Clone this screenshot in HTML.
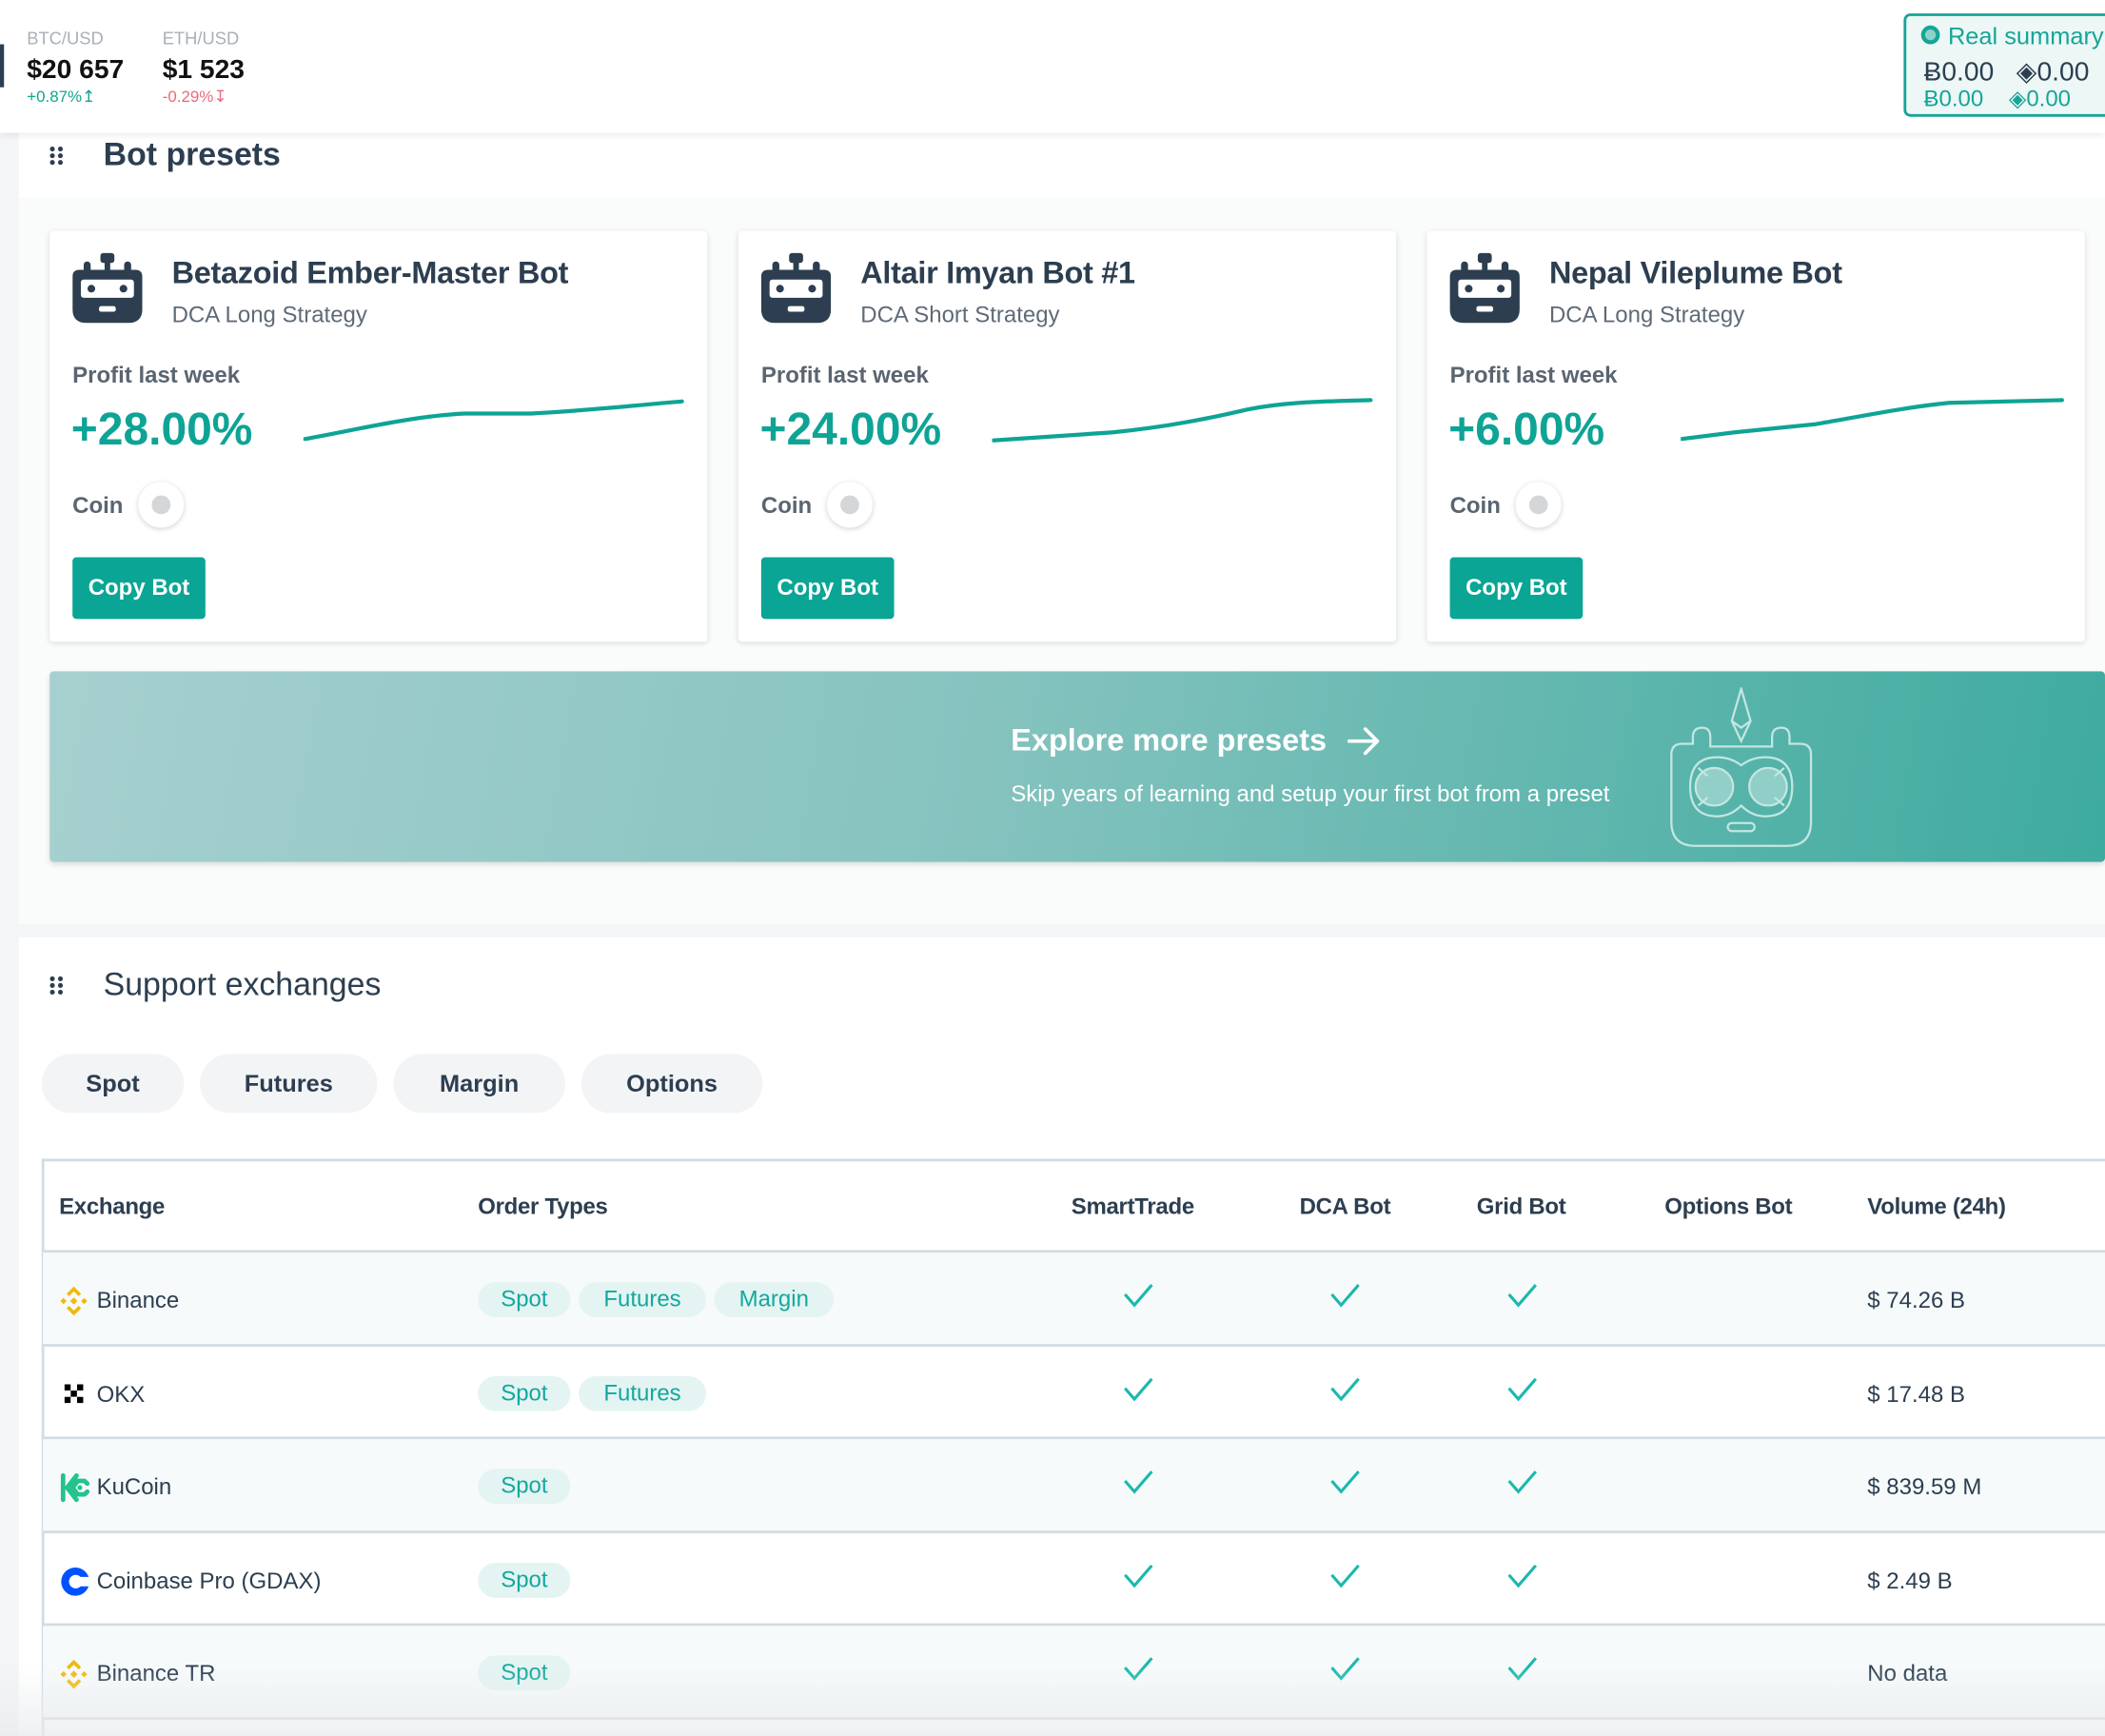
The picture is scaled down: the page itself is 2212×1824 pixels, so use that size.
<!DOCTYPE html>
<html><head><meta charset="utf-8"><style>
*{box-sizing:border-box;margin:0;padding:0}
html,body{width:2212px;height:1824px;overflow:hidden;background:#fff}
#w{width:1568px;height:1293px;transform:scale(1.41071);transform-origin:0 0;position:relative;font-family:"Liberation Sans",sans-serif;color:#2c3e50;background:#f4f5f7;overflow:hidden}
.a{position:absolute}
.lbl{font-size:13px;color:#a8b0b8}
.pr{font-size:20px;font-weight:bold;color:#111}
.card{position:absolute;top:172px;width:490px;height:306px;background:#fff;border-radius:3px;box-shadow:0 1px 4px rgba(0,0,0,.13)}
.card .t{position:absolute;left:91px;top:18px;font-size:23px;font-weight:bold;color:#2c3e50;white-space:nowrap;letter-spacing:-.2px}
.card .s{position:absolute;left:91px;top:53px;font-size:17px;color:#5f6b77}
.card .pl{position:absolute;left:17px;top:98px;font-size:17px;font-weight:bold;color:#5a6570}
.card .pc{position:absolute;left:16px;top:129px;font-size:34px;font-weight:bold;color:#0ea495}
.card .cn{position:absolute;left:17px;top:195px;font-size:17px;font-weight:bold;color:#5a6570}
.card .tg{position:absolute;left:66px;top:187px;width:34px;height:34px;border-radius:50%;background:#fff;box-shadow:0 1px 4px rgba(0,0,0,.18)}
.card .tg:after{content:"";position:absolute;left:10px;top:10px;width:14px;height:14px;border-radius:50%;background:#d4d6d8}
.card .btn{position:absolute;left:17px;top:243px;width:99px;height:46px;background:#0aa595;border-radius:3px;color:#fff;font-size:17px;font-weight:bold;text-align:center;line-height:46px}
.card svg.r{position:absolute;left:17px;top:16px}
.card svg.sp{position:absolute;left:189px;top:124px}
.tab{position:absolute;top:785px;height:44px;border-radius:22px;background:#f3f4f6;font-size:18px;font-weight:bold;color:#2c3e50;text-align:center;line-height:44px}
.th{position:absolute;top:889px;font-size:17px;font-weight:bold;color:#2c3e50;letter-spacing:-.2px}
.row{position:absolute;left:32px;width:1536px;height:70px;border-bottom:2px solid #d3dce2}
.row.alt{background:#f6fafb}
.row .n{position:absolute;left:40px;top:26px;font-size:17px;color:#2c3e50}
.row .v{position:absolute;left:1359px;top:26px;font-size:17px;color:#2c3e50}
.chip{position:absolute;top:22px;height:26px;border-radius:13px;background:#e4f4f2;color:#13a89e;font-size:17px;line-height:26px;text-align:center}
.ck{position:absolute;top:22px}
.ic{position:absolute;left:12px;top:24px}
</style></head><body><div id="w">
<div class="a" style="left:0;top:0;width:1568px;height:99px;background:#fff;box-shadow:0 2px 5px rgba(0,0,0,.08);z-index:2">
 <div class="a" style="left:0;top:33px;width:3px;height:32px;background:#2c3e50"></div>
 <div class="a lbl" style="left:20px;top:21px">BTC/USD</div>
 <div class="a pr" style="left:20px;top:41px">$20 657</div>
 <div class="a" style="left:20px;top:65px;font-size:12px;color:#12a58f">+0.87%↥</div>
 <div class="a lbl" style="left:121px;top:21px">ETH/USD</div>
 <div class="a pr" style="left:121px;top:41px">$1 523</div>
 <div class="a" style="left:121px;top:65px;font-size:12px;color:#e86a7a">-0.29%↧</div>
 <div class="a" style="left:1418px;top:10px;width:160px;height:77px;border:2px solid #16a597;border-radius:5px;background:#ecf7f6">
  <div class="a" style="left:11px;top:7px;width:14px;height:14px;border-radius:50%;background:#8fd2c9;border:3px solid #16a597"></div>
  <div class="a" style="left:31px;top:5px;font-size:18px;color:#16a597;white-space:nowrap">Real summary</div>
  <div class="a" style="left:13px;top:29px;font-size:20px;color:#2c3e50;white-space:nowrap">Ƀ0.00&nbsp;&nbsp;&nbsp;◈0.00</div>
  <div class="a" style="left:13px;top:52px;font-size:17px;color:#16a597;white-space:nowrap">Ƀ0.00&nbsp;&nbsp;&nbsp;&nbsp;◈0.00</div>
 </div>
</div>
<div class="a" style="left:14px;top:99px;width:1554px;height:589px;background:#fafbfb"></div>
<div class="a" style="left:14px;top:99px;width:1554px;height:48px;background:#fff"></div>
<svg class="a" style="left:36px;top:108px" width="12" height="16" viewBox="0 0 12 16"><g fill="#2c3e50"><circle cx="3" cy="3" r="1.8"/><circle cx="9" cy="3" r="1.8"/><circle cx="3" cy="8" r="1.8"/><circle cx="9" cy="8" r="1.8"/><circle cx="3" cy="13" r="1.8"/><circle cx="9" cy="13" r="1.8"/></g></svg>
<div class="a" style="left:77px;top:102px;font-size:24px;font-weight:bold;color:#2c3e50">Bot presets</div>

<div class="card" style="left:37px">
 <svg class="r" width="52" height="53" viewBox="0 0 100 100"><g fill="#2c3e50"><rect x="40" y="0" width="20" height="14" rx="4"/><rect x="46" y="10" width="8" height="16"/><rect x="16" y="12" width="10" height="16" rx="5"/><rect x="74" y="12" width="10" height="16" rx="5"/><path d="M0 34 Q0 24 10 24 H90 Q100 24 100 34 V80 Q100 100 80 100 H20 Q0 100 0 80Z"/></g><rect x="12" y="38" width="76" height="26" rx="4" fill="#fff"/><circle cx="27" cy="51" r="5.5" fill="#2c3e50"/><circle cx="73" cy="51" r="5.5" fill="#2c3e50"/><rect x="38" y="76" width="24" height="8" rx="3" fill="#fff"/></svg>
 <div class="t">Betazoid Ember-Master Bot</div><div class="s">DCA Long Strategy</div>
 <div class="pl">Profit last week</div><div class="pc">+28.00%</div>
 <svg class="sp" width="284" height="34"><path d="M1,31 C40,24 80,14 120,12 L170,12 C210,10 245,6 282,3" fill="none" stroke="#0ea495" stroke-width="3" stroke-linecap="round"/></svg>
 <div class="cn">Coin</div><div class="tg"></div><div class="btn">Copy Bot</div>
</div>
<div class="card" style="left:550px">
 <svg class="r" width="52" height="53" viewBox="0 0 100 100"><g fill="#2c3e50"><rect x="40" y="0" width="20" height="14" rx="4"/><rect x="46" y="10" width="8" height="16"/><rect x="16" y="12" width="10" height="16" rx="5"/><rect x="74" y="12" width="10" height="16" rx="5"/><path d="M0 34 Q0 24 10 24 H90 Q100 24 100 34 V80 Q100 100 80 100 H20 Q0 100 0 80Z"/></g><rect x="12" y="38" width="76" height="26" rx="4" fill="#fff"/><circle cx="27" cy="51" r="5.5" fill="#2c3e50"/><circle cx="73" cy="51" r="5.5" fill="#2c3e50"/><rect x="38" y="76" width="24" height="8" rx="3" fill="#fff"/></svg>
 <div class="t">Altair Imyan Bot #1</div><div class="s">DCA Short Strategy</div>
 <div class="pl">Profit last week</div><div class="pc">+24.00%</div>
 <svg class="sp" width="284" height="34"><path d="M1,32 L90,26 C130,22 160,16 190,9 C220,3 250,3 282,2" fill="none" stroke="#0ea495" stroke-width="3" stroke-linecap="round"/></svg>
 <div class="cn">Coin</div><div class="tg"></div><div class="btn">Copy Bot</div>
</div>
<div class="card" style="left:1063px">
 <svg class="r" width="52" height="53" viewBox="0 0 100 100"><g fill="#2c3e50"><rect x="40" y="0" width="20" height="14" rx="4"/><rect x="46" y="10" width="8" height="16"/><rect x="16" y="12" width="10" height="16" rx="5"/><rect x="74" y="12" width="10" height="16" rx="5"/><path d="M0 34 Q0 24 10 24 H90 Q100 24 100 34 V80 Q100 100 80 100 H20 Q0 100 0 80Z"/></g><rect x="12" y="38" width="76" height="26" rx="4" fill="#fff"/><circle cx="27" cy="51" r="5.5" fill="#2c3e50"/><circle cx="73" cy="51" r="5.5" fill="#2c3e50"/><rect x="38" y="76" width="24" height="8" rx="3" fill="#fff"/></svg>
 <div class="t">Nepal Vileplume Bot</div><div class="s">DCA Long Strategy</div>
 <div class="pl">Profit last week</div><div class="pc">+6.00%</div>
 <svg class="sp" width="286" height="34"><path d="M0,31 L40,26 L100,20 C140,13 170,7 200,4 L284,2" fill="none" stroke="#0ea495" stroke-width="3" stroke-linecap="round"/></svg>
 <div class="cn">Coin</div><div class="tg"></div><div class="btn">Copy Bot</div>
</div>

<div class="a" style="left:37px;top:500px;width:1531px;height:142px;border-radius:3px;background:linear-gradient(100deg,#a6d0cf 0%,#86c3bf 45%,#3eab9f 100%);box-shadow:0 2px 4px rgba(0,0,0,.12)">
 <div class="a" style="left:716px;top:38px;font-size:23px;font-weight:bold;color:#fff;white-space:nowrap">Explore more presets</div>
 <svg class="a" style="left:966px;top:41px" width="26" height="22" viewBox="0 0 26 22" fill="none" stroke="#fff" stroke-width="2.6" stroke-linecap="round" stroke-linejoin="round"><path d="M2 11 H23 M14 2 L23 11 L14 20"/></svg>
 <div class="a" style="left:716px;top:82px;font-size:17px;color:#fff;white-space:nowrap">Skip years of learning and setup your first bot from a preset</div>
 <svg class="a" style="left:1204px;top:12px" width="112" height="120" viewBox="0 0 112 120" fill="none" stroke="#c3e6e1" stroke-width="1.6"><path d="M56 1 L63 25 L56 40 L49 25Z M49 25 L56 30 L63 25"/><path d="M4 50 Q4 42 12 42 H20 V37 Q20 30 27 30 Q33 30 33 37 V44 H79 V37 Q79 30 86 30 Q92 30 92 37 V42 H100 Q108 42 108 50 V100 Q108 118 90 118 H22 Q4 118 4 100Z"/><path d="M18 74 Q18 52 38 52 Q48 52 56 58 Q64 52 74 52 Q94 52 94 74 Q94 96 74 96 Q64 96 56 88 Q48 96 38 96 Q18 96 18 74Z"/><path d="M24 60 L31 66 M24 88 L31 82 M88 60 L81 66 M88 88 L81 82"/><circle cx="36" cy="74" r="14" fill="#c3e6e1" fill-opacity=".55"/><circle cx="76" cy="74" r="14" fill="#c3e6e1" fill-opacity=".55"/><rect x="46" y="101" width="20" height="6" rx="3"/></svg>
</div>

<div class="a" style="left:14px;top:698px;width:1554px;height:600px;background:#fff"></div>
<svg class="a" style="left:36px;top:726px" width="12" height="16" viewBox="0 0 12 16"><g fill="#2c3e50"><circle cx="3" cy="3" r="1.8"/><circle cx="9" cy="3" r="1.8"/><circle cx="3" cy="8" r="1.8"/><circle cx="9" cy="8" r="1.8"/><circle cx="3" cy="13" r="1.8"/><circle cx="9" cy="13" r="1.8"/></g></svg>
<div class="a" style="left:77px;top:720px;font-size:24px;color:#2c3e50">Support exchanges</div>
<div class="tab" style="left:31px;width:106px">Spot</div>
<div class="tab" style="left:149px;width:132px">Futures</div>
<div class="tab" style="left:293px;width:128px">Margin</div>
<div class="tab" style="left:433px;width:135px">Options</div>

<div class="a" style="left:31px;top:863px;width:1537px;height:440px;border-top:2px solid #d3dce2;border-left:2px solid #d3dce2"></div>
<div class="a" style="left:33px;top:931px;width:1535px;height:2px;background:#d3dce2"></div>
<div class="th" style="left:44px">Exchange</div>
<div class="th" style="left:356px">Order Types</div>
<div class="th" style="left:798px">SmartTrade</div>
<div class="th" style="left:968px">DCA Bot</div>
<div class="th" style="left:1100px">Grid Bot</div>
<div class="th" style="left:1240px">Options Bot</div>
<div class="th" style="left:1391px">Volume (24h)</div>

<div class="row alt" style="top:933px">
 <svg class="ic" width="22" height="24" viewBox="0 0 22 24"><g fill="none" stroke="#f0b90b" stroke-width="2.6" stroke-linejoin="miter"><path d="M6.5 7.5 L11 3 L15.5 7.5"/><path d="M6.5 16.5 L11 21 L15.5 16.5"/></g><g fill="#f0b90b"><path d="M1 12 L3.3 9.7 L5.6 12 L3.3 14.3Z"/><path d="M21 12 L18.7 9.7 L16.4 12 L18.7 14.3Z"/><path d="M11 9.3 L13.7 12 L11 14.7 L8.3 12Z"/></g></svg>
 <div class="n">Binance</div>
 <div class="chip" style="left:324px;width:69px">Spot</div><div class="chip" style="left:399px;width:95px">Futures</div><div class="chip" style="left:500px;width:89px">Margin</div>
 <svg class="ck" style="left:804px" width="24" height="20"><path d="M2 9 L9 17 L22 2" fill="none" stroke="#1ab9ac" stroke-width="2.2"/></svg>
 <svg class="ck" style="left:958px" width="24" height="20"><path d="M2 9 L9 17 L22 2" fill="none" stroke="#1ab9ac" stroke-width="2.2"/></svg>
 <svg class="ck" style="left:1090px" width="24" height="20"><path d="M2 9 L9 17 L22 2" fill="none" stroke="#1ab9ac" stroke-width="2.2"/></svg>
 <div class="v">$ 74.26 B</div>
</div>
<div class="row" style="top:1003px;height:69px">
 <svg class="ic" style="left:16px;top:28px" width="14" height="14" viewBox="0 0 14 14"><g fill="#000"><rect x="0" y="0" width="4.6" height="4.6"/><rect x="9.4" y="0" width="4.6" height="4.6"/><rect x="4.7" y="4.7" width="4.6" height="4.6"/><rect x="0" y="9.4" width="4.6" height="4.6"/><rect x="9.4" y="9.4" width="4.6" height="4.6"/></g></svg>
 <div class="n">OKX</div>
 <div class="chip" style="left:324px;width:69px">Spot</div><div class="chip" style="left:399px;width:95px">Futures</div>
 <svg class="ck" style="left:804px" width="24" height="20"><path d="M2 9 L9 17 L22 2" fill="none" stroke="#1ab9ac" stroke-width="2.2"/></svg>
 <svg class="ck" style="left:958px" width="24" height="20"><path d="M2 9 L9 17 L22 2" fill="none" stroke="#1ab9ac" stroke-width="2.2"/></svg>
 <svg class="ck" style="left:1090px" width="24" height="20"><path d="M2 9 L9 17 L22 2" fill="none" stroke="#1ab9ac" stroke-width="2.2"/></svg>
 <div class="v">$ 17.48 B</div>
</div>
<div class="row alt" style="top:1072px">
 <svg class="ic" width="24" height="24" viewBox="0 0 24 24"><g fill="none" stroke="#23c38e" stroke-width="3.4" stroke-linecap="round" stroke-linejoin="round"><path d="M3 3 V21"/><path d="M13 3 L6 12 L13 21"/><path d="M14 7 L19 7 L21 9 M14 17 L19 17 L21 15"/><path d="M10 12 L14 7 M10 12 L14 17"/></g><circle cx="15.5" cy="12" r="1.8" fill="#23c38e"/></svg>
 <div class="n">KuCoin</div>
 <div class="chip" style="left:324px;width:69px">Spot</div>
 <svg class="ck" style="left:804px" width="24" height="20"><path d="M2 9 L9 17 L22 2" fill="none" stroke="#1ab9ac" stroke-width="2.2"/></svg>
 <svg class="ck" style="left:958px" width="24" height="20"><path d="M2 9 L9 17 L22 2" fill="none" stroke="#1ab9ac" stroke-width="2.2"/></svg>
 <svg class="ck" style="left:1090px" width="24" height="20"><path d="M2 9 L9 17 L22 2" fill="none" stroke="#1ab9ac" stroke-width="2.2"/></svg>
 <div class="v">$ 839.59 M</div>
</div>
<div class="row" style="top:1142px;height:69px">
 <svg class="ic" width="24" height="24" viewBox="0 0 24 24"><path d="M22 8.5 A10.5 10.5 0 1 0 22 15.5 H16 A5 5 0 1 1 16 8.5Z" fill="#0052ff"/></svg>
 <div class="n">Coinbase Pro (GDAX)</div>
 <div class="chip" style="left:324px;width:69px">Spot</div>
 <svg class="ck" style="left:804px" width="24" height="20"><path d="M2 9 L9 17 L22 2" fill="none" stroke="#1ab9ac" stroke-width="2.2"/></svg>
 <svg class="ck" style="left:958px" width="24" height="20"><path d="M2 9 L9 17 L22 2" fill="none" stroke="#1ab9ac" stroke-width="2.2"/></svg>
 <svg class="ck" style="left:1090px" width="24" height="20"><path d="M2 9 L9 17 L22 2" fill="none" stroke="#1ab9ac" stroke-width="2.2"/></svg>
 <div class="v">$ 2.49 B</div>
</div>
<div class="row alt" style="top:1211px">
 <svg class="ic" width="22" height="24" viewBox="0 0 22 24"><g fill="none" stroke="#f0b90b" stroke-width="2.6" stroke-linejoin="miter"><path d="M6.5 7.5 L11 3 L15.5 7.5"/><path d="M6.5 16.5 L11 21 L15.5 16.5"/></g><g fill="#f0b90b"><path d="M1 12 L3.3 9.7 L5.6 12 L3.3 14.3Z"/><path d="M21 12 L18.7 9.7 L16.4 12 L18.7 14.3Z"/><path d="M11 9.3 L13.7 12 L11 14.7 L8.3 12Z"/></g></svg>
 <div class="n">Binance TR</div>
 <div class="chip" style="left:324px;width:69px">Spot</div>
 <svg class="ck" style="left:804px" width="24" height="20"><path d="M2 9 L9 17 L22 2" fill="none" stroke="#1ab9ac" stroke-width="2.2"/></svg>
 <svg class="ck" style="left:958px" width="24" height="20"><path d="M2 9 L9 17 L22 2" fill="none" stroke="#1ab9ac" stroke-width="2.2"/></svg>
 <svg class="ck" style="left:1090px" width="24" height="20"><path d="M2 9 L9 17 L22 2" fill="none" stroke="#1ab9ac" stroke-width="2.2"/></svg>
 <div class="v">No data</div>
</div>
<div class="a" style="left:0;top:1240px;width:1568px;height:53px;background:linear-gradient(to bottom,rgba(235,238,240,0),rgba(232,235,237,.75))"></div>
</div></body></html>
